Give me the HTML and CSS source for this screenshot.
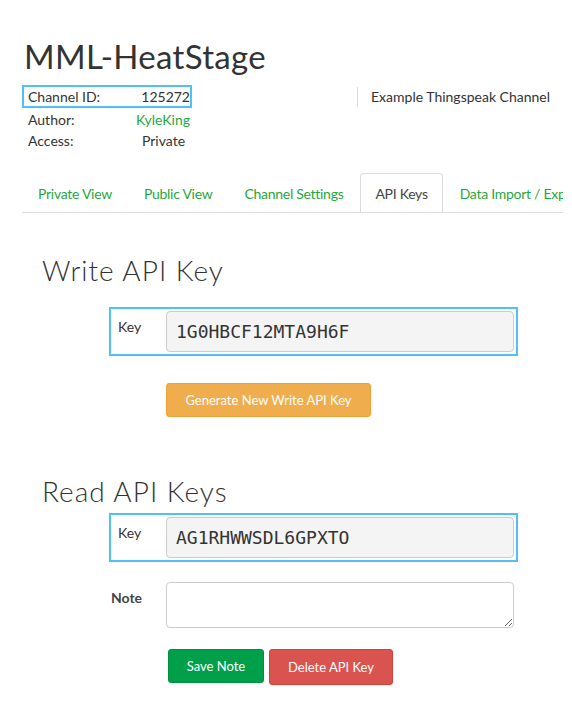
FILE: index.html
```html
<!DOCTYPE html>
<html>
<head>
<meta charset="utf-8">
<link rel="stylesheet" href="styles.css">
</head>
<body>
<div class="page">
  <h1 class="title">MML-HeatStage</h1>
  <div class="info">
    <div class="meta">
      <div class="row highlight"><span class="lbl">Channel ID:</span><span class="val">125272</span></div>
      <div class="row"><span class="lbl">Author:</span><span class="val link">KyleKing</span></div>
      <div class="row"><span class="lbl">Access:</span><span class="val">Private</span></div>
    </div>
    <div class="desc">Example Thingspeak Channel</div>
  </div>
  <ul class="tabs">
    <li class="tab">Private View</li>
    <li class="tab">Public View</li>
    <li class="tab">Channel Settings</li>
    <li class="tab active">API Keys</li>
    <li class="tab">Data Import / Export</li>
  </ul>
  <section class="sec">
    <h2 class="heading">Write API Key</h2>
    <div class="field highlight-box">
      <label class="flabel">Key</label>
      <div class="keyinput">1G0HBCF12MTA9H6F</div>
    </div>
    <div class="actions first">
      <button class="btn orange">Generate New Write API Key</button>
    </div>
  </section>
  <section class="sec read">
    <h2 class="heading">Read API Keys</h2>
    <div class="field highlight-box">
      <label class="flabel">Key</label>
      <div class="keyinput">AG1RHWWSDL6GPXTO</div>
    </div>
    <div class="field note">
      <label class="flabel bold">Note</label>
      <textarea class="notearea"></textarea>
    </div>
    <div class="actions">
      <button class="btn green">Save Note</button>
      <button class="btn red">Delete API Key</button>
    </div>
  </section>
</div>
</body>
</html>
```
FILE: styles.css
```css
* { box-sizing: border-box; }
html, body { margin: 0; padding: 0; background: #fff; }
body {
  font-family: "Lato", "Open Sans", sans-serif;
  font-size: 14px;
  color: #333;
  overflow: hidden;
  width: 572px;
  height: 720px;
}
.page { padding: 0 0 0 22px; }
.title {
  margin: 0;
  padding-top: 36px;
  font-family: "Lato", sans-serif;
  font-weight: 400;
  font-size: 33px;
  line-height: 40px;
  color: #333;
  padding-left: 2px;
  letter-spacing: 0.3px;
}
.info {
  display: flex;
  margin-top: 9px;
}
.meta { width: 335px; }
.row {
  display: flex;
  width: 170px;
  height: 21px;
  line-height: 19px;
  border: 2px solid transparent;
  padding-left: 4px;
}
.row.highlight { border-color: #4fc1f4; height: 23px; }
.lbl { width: 114px; }
.link { color: #1fa83e; }
.desc {
  margin-top: 2px;
  height: 20px;
  line-height: 20px;
  border-left: 1px solid #ddd;
  padding-left: 13px;
}
.tabs {
  list-style: none;
  margin: 23px 9px 0 0;
  padding: 0;
  display: flex;
  border-bottom: 1px solid #ddd;
  white-space: nowrap;
  overflow: hidden;
}
.tab {
  padding: 0 14px;
  height: 39px;
  line-height: 40px;
  color: #1fa83e;
  margin-right: 2px;
  border: 1px solid transparent;
  border-bottom: none;
  flex-shrink: 0;
  letter-spacing: -0.28px;
}
.tab:first-child { margin-left: 1px; }
.tab.active {
  color: #444;
  border-color: #ddd;
  border-radius: 4px 4px 0 0;
  background: #fff;
  margin-bottom: -1px;
  height: 40px;
}
.sec { padding-left: 20px; }
.heading {
  margin: 0;
  font-family: "Lato", sans-serif;
  font-weight: 300;
  font-size: 28px;
  line-height: 34px;
  color: #333;
  letter-spacing: 1px;
}
.sec:first-of-type .heading { margin-top: 40px; }
.field {
  display: flex;
  align-items: flex-start;
  margin-left: 67px;
  width: 409px;
}
.highlight-box {
  border: 2px solid #4fc1f4;
  padding: 2px 2px 2px 0;
  height: 49px;
}
.sec:first-of-type .highlight-box { margin-top: 20px; }
.flabel {
  width: 57px;
  padding-left: 7px;
  padding-top: 7px;
  font-size: 14px;
  color: #333;
}
.flabel.bold { font-weight: 700; color: #444; padding-left: 0; padding-top: 7px; }
.keyinput {
  flex: 1;
  height: 41px;
  margin-left: -2px;
  background: #f4f4f4;
  border: 1px solid #ccc;
  border-radius: 4px;
  padding-left: 9px;
  line-height: 39px;
  font-family: "DejaVu Sans Mono", monospace;
  font-size: 18px;
  color: #333;
}
.actions {
  margin-left: 124px;
  display: flex;
  gap: 5px;
}
.actions.first { margin-top: 27px; }
.btn {
  border: 1px solid transparent;
  border-radius: 3px;
  color: #fff;
  font-family: "Lato", sans-serif;
  font-size: 13px;
  height: 34px;
  padding: 0;
  white-space: nowrap;
  cursor: pointer;
}
.orange { background: #f0ad4e; border-color: #eea236; width: 205px; }
.green { background: #00a04a; border-color: #009040; width: 96px; height: 34px; }
.red { background: #d9534f; border-color: #d43f3a; width: 124px; height: 36px; }
.read .heading { margin-top: 57px; }
.read .highlight-box { margin-top: 5px; }
.note { margin-top: 20px; margin-left: 69px; width: 407px; }
.notearea {
  flex: 0 0 348px;
  height: 46px;
  margin-left: -2px;
  border: 1px solid #ccc;
  border-radius: 4px;
  resize: vertical;
  font-family: "Lato", sans-serif;
}
.read .actions { margin-top: 21px; margin-left: 126px; }
```
